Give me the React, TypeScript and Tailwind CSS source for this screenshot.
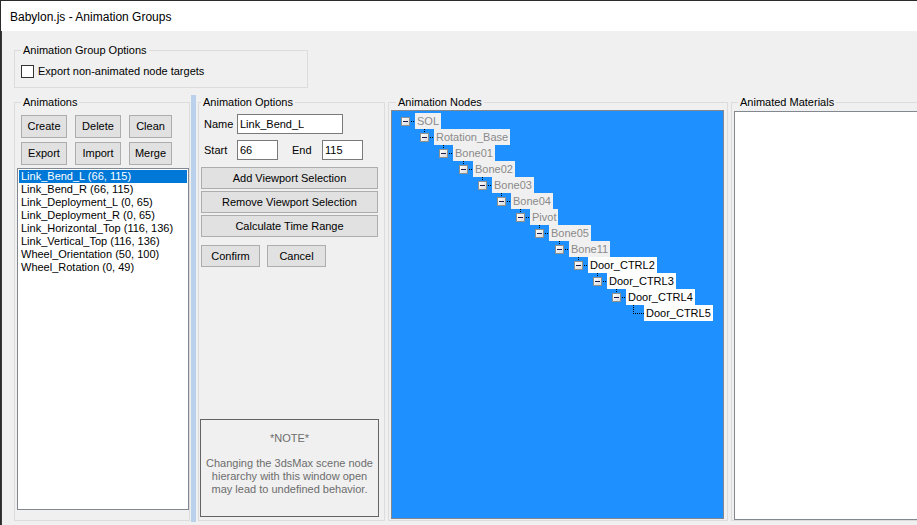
import React from "react";

type TreeNode = { name: string; depth: number; dim: boolean; leaf?: boolean };

const animations = [
  "Link_Bend_L (66, 115)",
  "Link_Bend_R (66, 115)",
  "Link_Deployment_L (0, 65)",
  "Link_Deployment_R (0, 65)",
  "Link_Horizontal_Top (116, 136)",
  "Link_Vertical_Top (116, 136)",
  "Wheel_Orientation (50, 100)",
  "Wheel_Rotation (0, 49)",
];

const nodes: TreeNode[] = [
  { name: "SOL", depth: 0, dim: true },
  { name: "Rotation_Base", depth: 1, dim: true },
  { name: "Bone01", depth: 2, dim: true },
  { name: "Bone02", depth: 3, dim: true },
  { name: "Bone03", depth: 4, dim: true },
  { name: "Bone04", depth: 5, dim: true },
  { name: "Pivot", depth: 6, dim: true },
  { name: "Bone05", depth: 7, dim: true },
  { name: "Bone11", depth: 8, dim: true },
  { name: "Door_CTRL2", depth: 9, dim: false },
  { name: "Door_CTRL3", depth: 10, dim: false },
  { name: "Door_CTRL4", depth: 11, dim: false },
  { name: "Door_CTRL5", depth: 12, dim: false, leaf: true },
];

function Legend({ text, offset }: { text: string; offset: "ml-[6px]" | "ml-[2px]" | "ml-[7px]" }) {
  return (
    <div className={`-mt-[7px] ${offset} self-start px-[2px] bg-[#f0f0f0] leading-[13px] h-[13px] whitespace-nowrap`}>
      {text}
    </div>
  );
}

function Btn({ label, w }: { label: string; w: string }) {
  return (
    <div
      className={`${w} h-[23px] border border-[#adadad] bg-[#e1e1e1] flex items-center justify-center leading-[13px] whitespace-nowrap`}
    >
      {label}
    </div>
  );
}

function WideBtn({ label }: { label: string }) {
  return (
    <div className="w-[177px] h-[22px] border border-[#adadad] bg-[#e1e1e1] flex items-center justify-center leading-[13px] whitespace-nowrap">
      {label}
    </div>
  );
}

function TextBox({ value, w }: { value: string; w: string }) {
  return (
    <div className={`${w} h-[20px] border border-[#7a7a7a] bg-white pl-[2px] flex items-center leading-[13px]`}>
      {value}
    </div>
  );
}

function Expander() {
  return (
    <svg width="9" height="9" viewBox="0 0 9 9" className="block">
      <defs>
        <linearGradient id="exp-fill" x1="0" y1="0" x2="1" y2="1">
          <stop offset="0" stopColor="#ffffff" />
          <stop offset="1" stopColor="#d8d8d8" />
        </linearGradient>
      </defs>
      <rect x="0.5" y="0.5" width="8" height="8" fill="url(#exp-fill)" stroke="#8e8f8f" />
      <line x1="2" y1="4.5" x2="7" y2="4.5" stroke="#1b1b4b" strokeWidth="1" />
    </svg>
  );
}

function TreeRow({ node, first }: { node: TreeNode; first: boolean }) {
  const indent = Math.round(node.depth * 19.2);
  const label = (
    <div
      className={`h-[16px] px-[2px] flex items-center leading-[13px] whitespace-nowrap ${
        node.dim ? "bg-[#f0f0f0] text-[#8a8a8a]" : "bg-white text-black"
      }`}
    >
      {node.name}
    </div>
  );

  if (node.leaf) {
    return (
      <div className="h-[16px] flex items-start" style={{ paddingLeft: indent }}>
        <svg width="13" height="16" viewBox="0 0 13 16" className="block shrink-0">
          <g fill="#000">
            <rect x="2" y="0" width="1" height="1" />
            <rect x="2" y="2" width="1" height="1" />
            <rect x="2" y="4" width="1" height="1" />
            <rect x="2" y="6" width="1" height="1" />
            <rect x="2" y="8" width="1" height="1" />
            <rect x="4" y="8" width="1" height="1" />
            <rect x="6" y="8" width="1" height="1" />
            <rect x="8" y="8" width="1" height="1" />
            <rect x="10" y="8" width="1" height="1" />
            <rect x="12" y="8" width="1" height="1" />
          </g>
        </svg>
        {label}
      </div>
    );
  }

  return (
    <div className="h-[16px] flex items-start" style={{ paddingLeft: indent }}>
      <svg width="14" height="16" viewBox="0 0 14 16" className="block shrink-0">
        {!first && (
          <g fill="#000">
            <rect x="4" y="0" width="1" height="1" />
            <rect x="4" y="2" width="1" height="1" />
          </g>
        )}
        <g fill="#000">
          <rect x="10" y="8" width="1" height="1" />
          <rect x="12" y="8" width="1" height="1" />
        </g>
        <foreignObject x="0" y="4" width="9" height="9">
          <Expander />
        </foreignObject>
      </svg>
      {label}
    </div>
  );
}

export default function App() {
  return (
    <div className="w-[917px] h-[525px] overflow-hidden flex flex-col bg-white border-t border-l border-[#2b2b2b] font-['Liberation_Sans',Arial,sans-serif] text-[11px] text-black">
      {/* title bar */}
      <div className="h-[30px] shrink-0 bg-white flex items-center pl-[9px] text-[12px] leading-[16px] pt-[1px]">
        Babylon.js - Animation Groups
      </div>

      {/* client area */}
      <div className="flex-1 bg-[#f0f0f0] border-l border-[#3a3a3a] flex flex-col">
        {/* Animation Group Options */}
        <div className="ml-[12px] mt-[19px] w-[294px] h-[38px] border border-[#dcdcdc] flex flex-col shrink-0">
          <Legend text="Animation Group Options" offset="ml-[6px]" />
          <div className="mt-[8px] ml-[6px] flex items-center">
            <div className="w-[13px] h-[13px] border border-[#333333] bg-white" />
            <span className="ml-[4px] leading-[13px]">Export non-animated node targets</span>
          </div>
        </div>

        <div className="mt-[7px] ml-[12px] flex items-start">
          {/* Animations */}
          <div className="mt-[7px] w-[176px] h-[419px] shrink-0 border border-[#dcdcdc] flex flex-col">
            <Legend text="Animations" offset="ml-[6px]" />
            <div className="pl-[6px] pt-[6px]">
              <div className="flex gap-[8px]">
                <Btn label="Create" w="w-[46px]" />
                <Btn label="Delete" w="w-[46px]" />
                <Btn label="Clean" w="w-[43px]" />
              </div>
              <div className="flex gap-[8px] mt-[4px]">
                <Btn label="Export" w="w-[46px]" />
                <Btn label="Import" w="w-[46px]" />
                <Btn label="Merge" w="w-[43px]" />
              </div>
            </div>
            <div className="ml-[2px] mt-[3px] w-[172px] h-[342px] border border-[#828790] bg-white pl-[1px] pt-[1px]">
              {animations.map((a, i) => (
                <div
                  key={a}
                  className={`w-[168px] h-[13px] pl-[2px] leading-[13px] whitespace-nowrap ${
                    i === 0 ? "bg-[#0078d7] text-white" : "text-black"
                  }`}
                >
                  {a}
                </div>
              ))}
            </div>
          </div>

          {/* splitter */}
          <div className="ml-[1px] w-[5px] h-[427px] shrink-0 bg-[#b9d1ea]" />

          {/* Animation Options */}
          <div className="ml-[2px] mt-[7px] w-[187px] h-[419px] shrink-0 border border-[#dcdcdc] flex flex-col">
            <Legend text="Animation Options" offset="ml-[2px]" />
            <div className="flex-1 flex flex-col">
              <div className="pl-[5px] pt-[5px]">
                <div className="flex items-center h-[20px]">
                  <span className="w-[33px] leading-[13px]">Name</span>
                  <TextBox value="Link_Bend_L" w="w-[106px]" />
                </div>
                <div className="flex items-center h-[20px] mt-[6px]">
                  <span className="w-[33px] leading-[13px]">Start</span>
                  <TextBox value="66" w="w-[41px]" />
                  <span className="ml-[14px] w-[30px] leading-[13px]">End</span>
                  <TextBox value="115" w="w-[41px]" />
                </div>
              </div>
              <div className="pl-[2px] mt-[7px] flex flex-col gap-[2px]">
                <WideBtn label="Add Viewport Selection" />
                <WideBtn label="Remove Viewport Selection" />
                <WideBtn label="Calculate Time Range" />
              </div>
              <div className="pl-[2px] mt-[8px] flex gap-[7px]">
                <div className="w-[59px] h-[22px] border border-[#adadad] bg-[#e1e1e1] flex items-center justify-center leading-[13px]">
                  Confirm
                </div>
                <div className="w-[59px] h-[22px] border border-[#adadad] bg-[#e1e1e1] flex items-center justify-center leading-[13px]">
                  Cancel
                </div>
              </div>
              <div className="mt-auto mb-[3px] ml-[1px] w-[179px] h-[98px] border border-[#646464] text-center text-[#6d6d6d] leading-[13px] pt-[12px]">
                <div>*NOTE*</div>
                <div className="mt-[12px]">
                  Changing the 3dsMax scene node
                  <br />
                  hierarchy with this window open
                  <br />
                  may lead to undefined behavior.
                </div>
              </div>
            </div>
          </div>

          {/* Animation Nodes */}
          <div className="ml-[3px] mt-[7px] w-[340px] h-[419px] shrink-0 border border-[#dcdcdc] flex flex-col">
            <Legend text="Animation Nodes" offset="ml-[7px]" />
            <div className="ml-[2px] mt-[1px] w-[333px] h-[409px] border border-[#828790] bg-[#1e90ff] pt-[2px] pl-[9px]">
              {nodes.map((n, i) => (
                <TreeRow key={n.name} node={n} first={i === 0} />
              ))}
            </div>
          </div>

          {/* Animated Materials */}
          <div className="ml-[3px] mt-[7px] w-[260px] h-[419px] shrink-0 border border-[#dcdcdc] flex flex-col">
            <Legend text="Animated Materials" offset="ml-[6px]" />
            <div className="ml-[2px] mt-[2px] w-[250px] h-[409px] border border-[#828790] bg-white" />
          </div>
        </div>
      </div>
    </div>
  );
}
